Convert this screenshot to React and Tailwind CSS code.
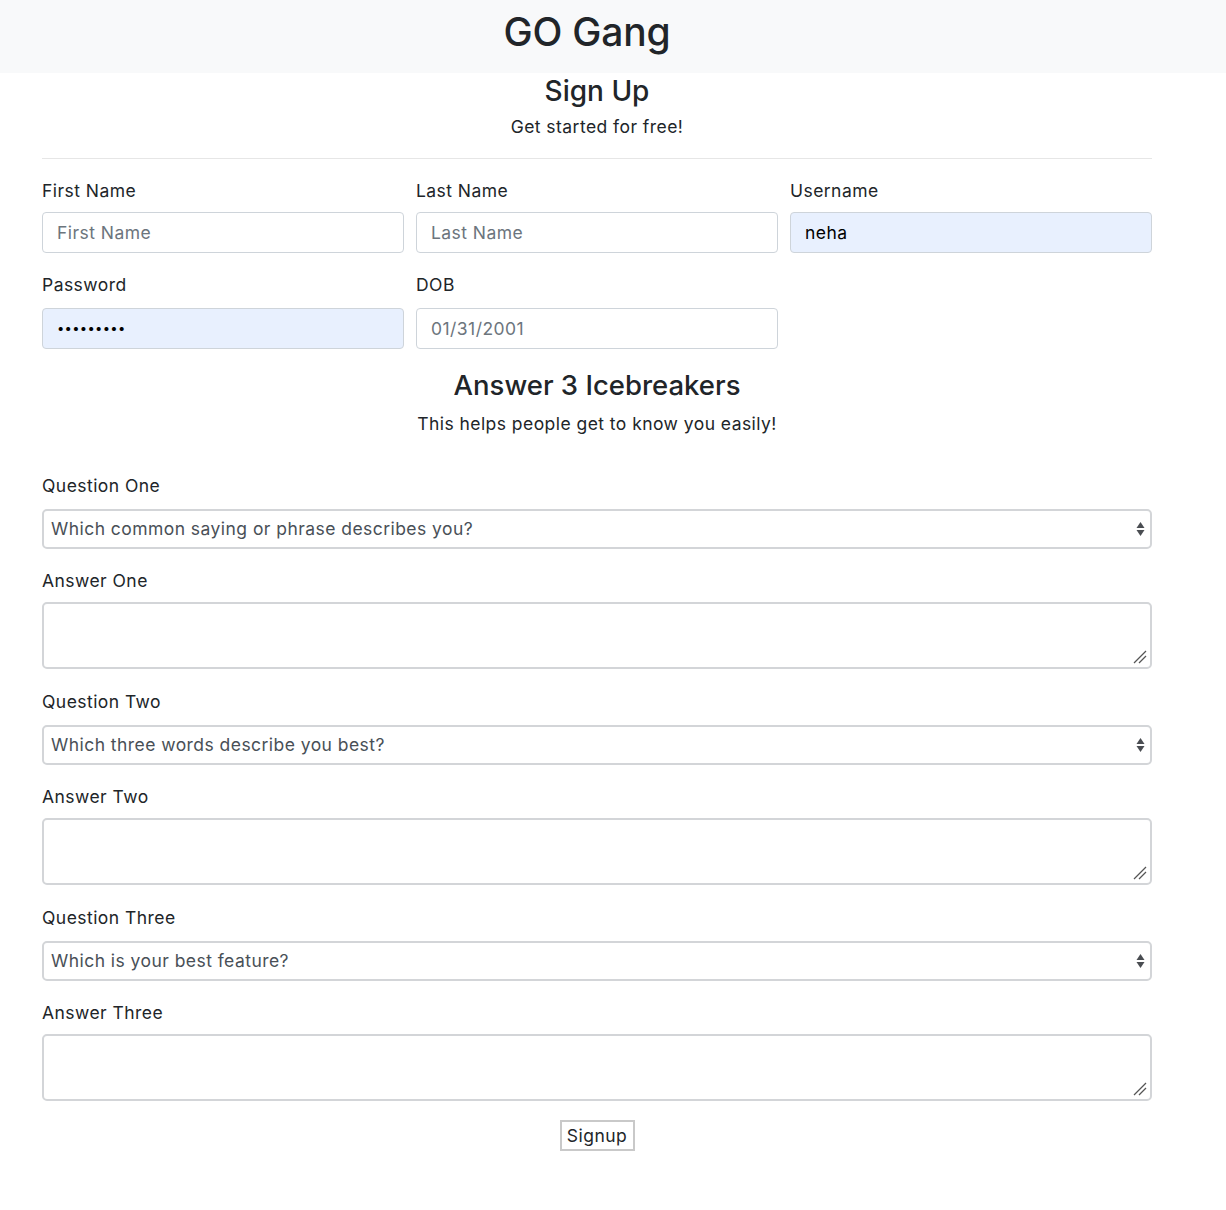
import React from "react";

const font = { fontFamily: "Inter, 'Noto Sans', 'Liberation Sans', sans-serif" };

function Label({ children, mb }) {
  return (
    <div className={`h-[26px] leading-[26px] text-[17.5px] tracking-[0.45px] text-[#212529] ${mb}`}>{children}</div>
  );
}

function TextInput({ placeholder, value, filled, gray }) {
  return (
    <input
      readOnly
      placeholder={placeholder}
      value={value || ""}
      className={`block w-full h-[41px] rounded-[4px] border border-[#ced4da] px-[14px] text-[17.5px] tracking-[0.45px] outline-none ${
        filled ? "bg-[#e8f0fe] text-black" : "bg-white"
      } ${gray ? "text-[#6c757d]" : ""} placeholder:text-[#6c757d]`}
      style={font}
    />
  );
}

function SelectBox({ text }) {
  return (
    <div className="relative h-[40px] w-full rounded-[5px] border-2 border-[#d3d5d8] bg-white flex items-center pl-[7px]">
      <span className="text-[17.5px] tracking-[0.45px] text-[#495057]">{text}</span>
      <svg className="absolute right-[5px] top-1/2 -translate-y-1/2" width="9" height="16" viewBox="0 0 9 16">
        <path d="M4.5 1 L8.5 7 L0.5 7 Z" fill="#4a4d52" />
        <path d="M4.5 15 L8.5 9 L0.5 9 Z" fill="#4a4d52" />
      </svg>
    </div>
  );
}

function Area() {
  return (
    <div className="relative h-[67px] w-full rounded-[5px] border-2 border-[#d3d5d8] bg-white">
      <svg className="absolute right-[3px] bottom-[3px]" width="14" height="14" viewBox="0 0 14 14">
        <path d="M1 13 L13 1" stroke="#555" strokeWidth="1.3" />
        <path d="M6 13 L13 6" stroke="#555" strokeWidth="1.3" />
      </svg>
    </div>
  );
}

export default function App() {
  const qs = [
    ["Question One", "Which common saying or phrase describes you?", "Answer One"],
    ["Question Two", "Which three words describe you best?", "Answer Two"],
    ["Question Three", "Which is your best feature?", "Answer Three"],
  ];
  return (
    <div className="min-h-[1210px] bg-white text-[#212529]" style={font}>
      <div className="h-[73px] bg-[#f8f9fa] flex items-start justify-center pt-[8px] pr-[52px]">
        <h1 className="text-[39px] font-medium leading-[48px] tracking-[-0.2px]">GO Gang</h1>
      </div>
      <div className="ml-[42px] w-[1110px]">
        <h3 className="text-center text-[28px] font-medium leading-[36px]">Sign Up</h3>
        <p className="mt-[5px] text-center text-[17.5px] tracking-[0.45px] leading-[26px]">Get started for free!</p>
        <div className="mt-[18px] h-px bg-[#e6e6e6]" />
        <div className="mt-[19px] grid grid-cols-3 gap-x-[12px]">
          <div className="mb-[19px]">
            <Label mb="mb-[8px]">First Name</Label>
            <TextInput placeholder="First Name" />
          </div>
          <div className="mb-[19px]">
            <Label mb="mb-[8px]">Last Name</Label>
            <TextInput placeholder="Last Name" />
          </div>
          <div className="mb-[19px]">
            <Label mb="mb-[8px]">Username</Label>
            <TextInput value="neha" filled />
          </div>
          <div>
            <Label mb="mb-[10px]">Password</Label>
            <div className="h-[41px] rounded-[4px] border border-[#ced4da] bg-[#e8f0fe] px-[14px] flex items-center">
              <span className="text-[13px] tracking-[0.3px] text-black leading-none">•••••••••</span>
            </div>
          </div>
          <div>
            <Label mb="mb-[10px]">DOB</Label>
            <TextInput value="01/31/2001" gray />
          </div>
        </div>
        <h3 className="mt-[18px] text-center text-[27.5px] font-medium leading-[36px]">Answer 3 Icebreakers</h3>
        <p className="mt-[8px] text-center text-[17.5px] tracking-[0.45px] leading-[26px]">This helps people get to know you easily!</p>
        <div className="mt-[36px]">
          {qs.map(([q, s, a], i) => (
            <div key={i}>
              <Label mb="mb-[10px]">{q}</Label>
              <SelectBox text={s} />
              <div className="mt-[19px]">
                <Label mb="mb-[8px]">{a}</Label>
                <Area />
              </div>
              {i < 2 && <div className="h-[20px]" />}
            </div>
          ))}
        </div>
        <div className="mt-[19px] flex justify-center">
          <button className="h-[31px] w-[75px] border-2 border-[#c9c9c9] bg-white text-[17.5px] tracking-[0.45px] text-[#212529] leading-none">
            Signup
          </button>
        </div>
      </div>
    </div>
  );
}
